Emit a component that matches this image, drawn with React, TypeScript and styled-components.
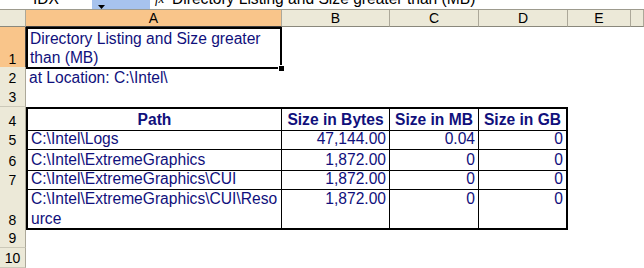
import React from "react";
import styled, { createGlobalStyle } from "styled-components";

const GlobalStyle = createGlobalStyle`
  html, body {
    margin: 0;
    padding: 0;
    background: #ffffff;
    font-family: "Liberation Sans", Arial, sans-serif;
  }
`;

const COLS = "26px 256px 108px 89px 89px 63px 1fr";
const INK = "#10107c";

type Align = "left" | "right" | "center";
type Borders = { t?: number; l?: number; r?: number; b?: number };

interface CellData {
  text?: string;
  lines?: string[];
  align?: Align;
  bold?: boolean;
  bd?: Borders;
}

interface RowData {
  n: number;
  h: number;
  cells: CellData[];
}

const Sheet = styled.div`
  width: 644px;
  height: 268px;
  overflow: hidden;
  display: flex;
  flex-direction: column;
`;

const FormulaBar = styled.div`
  height: 9px;
  display: flex;
  align-items: flex-end;
  overflow: hidden;
  border-bottom: 1px solid #9d9b8e;
  font-size: 15.6px;
  line-height: 16px;
  color: #000;
`;

const NameBox = styled.div`
  width: 92px;
  text-align: center;
  margin-bottom: 2px;
  flex-shrink: 0;
`;

const NameDrop = styled.div`
  width: 58px;
  height: 9px;
  align-self: stretch;
  background: #a7c3ee;
  display: flex;
  align-items: flex-end;
  padding-left: 6px;
  box-sizing: border-box;
  flex-shrink: 0;
`;

const Fx = styled.div`
  width: 22px;
  padding-left: 5px;
  box-sizing: border-box;
  font-family: "Liberation Serif", serif;
  font-style: italic;
  font-size: 13px;
  margin-bottom: 2px;
  flex-shrink: 0;
`;

const FormulaText = styled.div`
  white-space: nowrap;
  margin-bottom: 2px;
`;

const Row = styled.div<{ $h: number }>`
  display: grid;
  grid-template-columns: ${COLS};
  height: ${(p) => p.$h}px;
  flex-shrink: 0;
`;

const Corner = styled.div`
  background: #ece9d8;
  border-right: 1px solid #aca899;
  border-bottom: 1px solid #8a887c;
`;

const ColHead = styled.div<{ $active?: boolean }>`
  background: ${(p) => (p.$active ? "#f9c58a" : "#ece9d8")};
  border-right: 1px solid #aca899;
  border-bottom: 1px solid ${(p) => (p.$active ? "#3f3f3f" : "#8a887c")};
  display: flex;
  align-items: center;
  justify-content: center;
  font-size: 14px;
  color: #000;
`;

const RowHead = styled.div<{ $active?: boolean }>`
  background: ${(p) => (p.$active ? "#f9c58a" : "#ece9d8")};
  border-right: 1px solid ${(p) => (p.$active ? "#3f3f3f" : "#aca899")};
  border-bottom: 1px solid #cbc8b8;
  display: flex;
  align-items: flex-end;
  justify-content: center;
  font-size: 14px;
  line-height: 16px;
  padding-bottom: 1px;
  box-sizing: border-box;
  color: #000;
`;

const Cell = styled.div<{ $align?: Align; $bold?: boolean; $bd?: Borders }>`
  position: relative;
  box-sizing: border-box;
  padding: 1px 3px 0 3px;
  font-size: 15.6px;
  line-height: 19.5px;
  color: ${INK};
  font-weight: ${(p) => (p.$bold ? 700 : 400)};
  text-align: ${(p) => p.$align || "left"};
  white-space: nowrap;
  border-top: ${(p) => p.$bd?.t || 0}px solid #000;
  border-left: ${(p) => p.$bd?.l || 0}px solid #000;
  border-right: ${(p) => p.$bd?.r || 0}px solid #000;
  border-bottom: ${(p) => p.$bd?.b || 0}px solid #000;
`;

const SelectedCell = styled(Cell)`
  white-space: normal;
  border: 2px solid #000;
  padding: 0 3px 0 2px;
  line-height: 19px;
`;

const FillHandle = styled.span`
  position: absolute;
  right: -4px;
  bottom: -4px;
  width: 5px;
  height: 5px;
  background: #000;
  border-top: 1px solid #fff;
  border-left: 1px solid #fff;
`;

const EmptyCell = styled.div``;

const LETTERS = ["A", "B", "C", "D", "E", ""];

// borders for the table block A4:D8
const tb = (row: number, col: number): Borders => ({
  t: row === 4 ? 2 : 0,
  l: col === 0 ? 2 : 0,
  r: col === 3 ? 2 : 1,
  b: row === 8 ? 2 : 1,
});

const head = (t: string, col: number): CellData => ({ text: t, align: "center", bold: true, bd: tb(4, col) });

const data = (row: number, path: string | string[], bytes: string, mb: string, gb: string): CellData[] => [
  Array.isArray(path) ? { lines: path, bd: tb(row, 0) } : { text: path, bd: tb(row, 0) },
  { text: bytes, align: "right", bd: tb(row, 1) },
  { text: mb, align: "right", bd: tb(row, 2) },
  { text: gb, align: "right", bd: tb(row, 3) },
];

const rows: RowData[] = [
  { n: 2, h: 20, cells: [{ text: "at Location: C:\\Intel\\" }] },
  { n: 3, h: 20, cells: [] },
  {
    n: 4,
    h: 21,
    cells: [head("Path", 0), head("Size in Bytes", 1), head("Size in MB", 2), head("Size in GB", 3)],
  },
  { n: 5, h: 21, cells: data(5, "C:\\Intel\\Logs", "47,144.00", "0.04", "0") },
  { n: 6, h: 19, cells: data(6, "C:\\Intel\\ExtremeGraphics", "1,872.00", "0", "0") },
  { n: 7, h: 20, cells: data(7, "C:\\Intel\\ExtremeGraphics\\CUI", "1,872.00", "0", "0") },
  {
    n: 8,
    h: 41,
    cells: data(8, ["C:\\Intel\\ExtremeGraphics\\CUI\\Reso", "urce"], "1,872.00", "0", "0"),
  },
  { n: 9, h: 19, cells: [] },
  { n: 10, h: 20, cells: [] },
];

function DropArrow() {
  return (
    <svg width="7" height="4" viewBox="0 0 7 4">
      <path d="M0 0 L7 0 L3.5 4 Z" fill="#000" />
    </svg>
  );
}

function App() {
  return (
    <>
      <GlobalStyle />
      <Sheet>
        <FormulaBar>
          <NameBox>IDX</NameBox>
          <NameDrop>
            <DropArrow />
          </NameDrop>
          <Fx>fx</Fx>
          <FormulaText>Directory Listing and Size greater than (MB)</FormulaText>
        </FormulaBar>

        <Row $h={17}>
          <Corner />
          {LETTERS.map((l, i) => (
            <ColHead key={i} $active={l === "A"}>
              {l}
            </ColHead>
          ))}
        </Row>

        <Row $h={40}>
          <RowHead $active>1</RowHead>
          <SelectedCell>
            Directory Listing and Size greater than (MB)
            <FillHandle />
          </SelectedCell>
        </Row>

        {rows.map((r) => (
          <Row key={r.n} $h={r.h}>
            <RowHead>{r.n}</RowHead>
            {r.cells.map((c, i) => (
              <Cell key={i} $align={c.align} $bold={c.bold} $bd={c.bd}>
                {c.lines
                  ? c.lines.map((ln, j) => (
                      <React.Fragment key={j}>
                        {j > 0 && <br />}
                        {ln}
                      </React.Fragment>
                    ))
                  : c.text}
              </Cell>
            ))}
            {r.cells.length === 0 && <EmptyCell />}
          </Row>
        ))}
      </Sheet>
    </>
  );
}

export default App;
